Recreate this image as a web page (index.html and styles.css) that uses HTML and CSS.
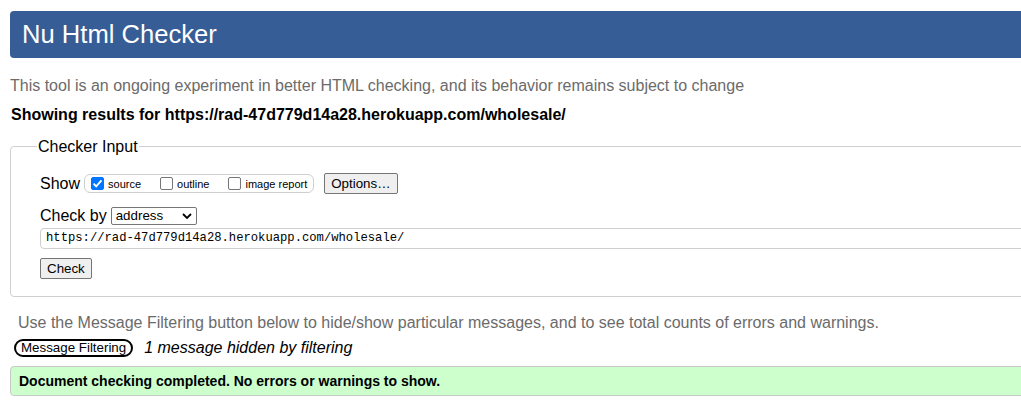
FILE: index.html
```html
<!DOCTYPE html>
<html>
<head>
<meta charset="utf-8">
<title>Nu Html Checker</title>
<link rel="stylesheet" href="styles.css">
</head>
<body>
<div class="page">
  <h1 class="banner">Nu Html Checker</h1>
  <p class="intro">This tool is an ongoing experiment in better HTML checking, and its behavior remains subject to change</p>
  <p class="results">Showing results for https://rad-47d779d14a28.herokuapp.com/wholesale/</p>
  <fieldset class="input-box">
    <legend class="legend">Checker Input</legend>
    <div class="row show-row">
      <span class="label">Show</span>
      <span class="opts">
        <span class="opt"><span class="cb checked"><svg viewBox="0 0 13 13" width="13" height="13"><path d="M2.6 6.6 L5.2 9.3 L10.5 3.4" fill="none" stroke="#fff" stroke-width="1.9"/></svg></span>source</span>
        <span class="opt"><span class="cb"></span>outline</span>
        <span class="opt"><span class="cb"></span>image report</span>
      </span>
      <span class="btn options">Options…</span>
    </div>
    <div class="row by-row">
      <span class="label">Check by</span>
      <span class="select">address<svg viewBox="0 0 10 6" width="10" height="6"><path d="M1 1 L5 5 L9 1" fill="none" stroke="#000" stroke-width="1.8"/></svg></span>
    </div>
    <div class="url">https://rad-47d779d14a28.herokuapp.com/wholesale/</div>
    <span class="btn check">Check</span>
  </fieldset>
  <p class="hint">Use the Message Filtering button below to hide/show particular messages, and to see total counts of errors and warnings.</p>
  <div class="filter-row">
    <span class="filter-btn">Message Filtering</span>
    <span class="hidden-note">1 message hidden by filtering</span>
  </div>
  <div class="success">Document checking completed. No errors or warnings to show.</div>
</div>
</body>
</html>
```

FILE: styles.css
```css
html, body {
  margin: 0;
  padding: 0;
  overflow: hidden;
  background: #fff;
}
body {
  font-family: "Liberation Sans", Arial, sans-serif;
  font-size: 16px;
  color: #000;
}
.page {
  width: 1060px;
  padding: 11px 0 0 10px;
}
.banner {
  margin: 0;
  height: 47px;
  box-sizing: border-box;
  background: #365d95;
  color: #fff;
  font-weight: normal;
  font-size: 25.6px;
  line-height: 47px;
  padding-left: 12px;
  border-radius: 4px 0 0 4px;
}
.intro {
  margin: 18px 0 0 0;
  color: #6b6b6b;
  line-height: 19px;
}
.results {
  margin: 10px 0 0 1px;
  font-weight: bold;
  line-height: 19px;
}
.input-box {
  margin: 13px 0 0 0;
  border: 1px solid #cfcfcf;
  border-radius: 4px;
  padding: 0 0 17px 29px;
}
.legend {
  padding: 0 1px;
  margin-left: -3px;
  line-height: 19px;
}
.row {
  display: flex;
  align-items: center;
}
.show-row {
  margin-top: 17px;
  height: 21px;
}
.label {
  line-height: 19px;
}
.opts {
  display: inline-flex;
  align-items: center;
  margin-left: 4px;
  height: 19px;
  box-sizing: border-box;
  border: 1px solid #cfcfcf;
  border-radius: 6px;
  padding: 0 6px 0 6px;
  font-size: 11px;
}
.opt {
  display: inline-flex;
  align-items: center;
  margin-right: 19px;
}
.opt:last-child {
  margin-right: 0;
}
.cb {
  display: inline-block;
  width: 13px;
  height: 13px;
  box-sizing: border-box;
  border: 1px solid #767676;
  border-radius: 2px;
  margin-right: 4px;
  background: #fff;
}
.cb svg {
  display: block;
  margin: -1px;
}
.cb.checked {
  background: #0075ff;
  border-color: #0075ff;
}
.btn {
  display: inline-block;
  box-sizing: border-box;
  background: #efefef;
  border: 1px solid #767676;
  border-radius: 2px;
  font-size: 13.33px;
  line-height: 19px;
  color: #000;
}
.options {
  margin-left: 10px;
  padding: 0 6px;
  height: 21px;
}
.by-row {
  margin-top: 12px;
}
.select {
  display: inline-flex;
  align-items: center;
  justify-content: space-between;
  margin-left: 4px;
  width: 86px;
  height: 18px;
  box-sizing: border-box;
  border: 1px solid #767676;
  border-radius: 2px;
  padding: 0 4px 0 4px;
  font-size: 13.33px;
}
.url {
  margin-top: 3px;
  height: 21px;
  box-sizing: border-box;
  border: 1px solid #cfcfcf;
  border-radius: 4px;
  font-family: "Liberation Mono", "Courier New", monospace;
  font-size: 12.2px;
  line-height: 19px;
  padding-left: 5px;
}
.check {
  margin-top: 9px;
  padding: 0 6px;
  height: 21px;
}
.hint {
  margin: 16px 0 0 8px;
  color: #6b6b6b;
  line-height: 19px;
}
.filter-row {
  display: flex;
  align-items: center;
  margin: 6px 0 0 4px;
}
.filter-btn {
  display: inline-block;
  box-sizing: border-box;
  height: 18px;
  border: 2px solid #000;
  border-radius: 9px;
  padding: 0 5px;
  font-size: 13.33px;
  line-height: 14px;
}
.hidden-note {
  margin-left: 11px;
  font-style: italic;
  line-height: 19px;
}
.success {
  margin-top: 9px;
  height: 30px;
  box-sizing: border-box;
  border: 1px solid #c8c8c8;
  border-radius: 4px 0 0 4px;
  background: #ccffcc;
  font-weight: bold;
  font-size: 14px;
  line-height: 28px;
  padding-left: 8px;
}
```
